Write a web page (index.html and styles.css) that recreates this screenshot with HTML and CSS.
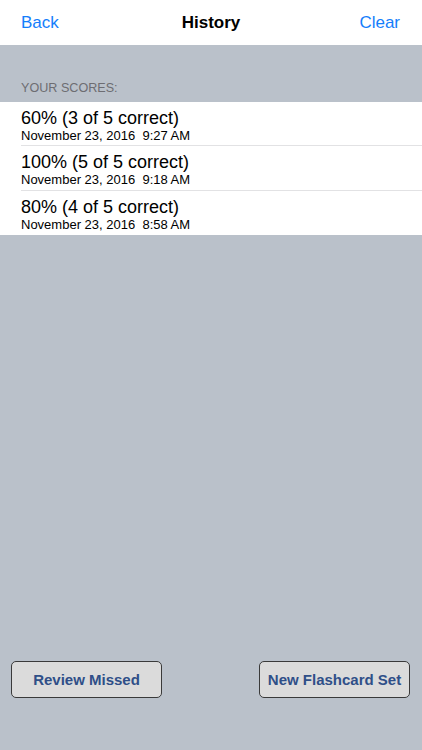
FILE: index.html
```html
<!DOCTYPE html>
<html>
<head>
<meta charset="utf-8">
<link rel="stylesheet" href="styles.css">
</head>
<body>
<div class="screen">
  <header class="navbar">
    <span class="nav-btn">Back</span>
    <span class="nav-title">History</span>
    <span class="nav-btn">Clear</span>
  </header>
  <main class="content">
    <div class="section-header">YOUR SCORES:</div>
    <ul class="list">
      <li class="row">
        <div class="score">60% (3 of 5 correct)</div>
        <div class="date">November 23, 2016  9:27 AM</div>
      </li>
      <li class="row">
        <div class="score">100% (5 of 5 correct)</div>
        <div class="date">November 23, 2016  9:18 AM</div>
      </li>
      <li class="row">
        <div class="score">80% (4 of 5 correct)</div>
        <div class="date">November 23, 2016  8:58 AM</div>
      </li>
    </ul>
  </main>
  <footer class="actions">
    <button class="action-btn">Review Missed</button>
    <button class="action-btn">New Flashcard Set</button>
  </footer>
</div>
</body>
</html>
```
FILE: styles.css
```css
* { box-sizing: border-box; }
html, body {
  margin: 0;
  padding: 0;
  width: 422px;
  height: 750px;
  overflow: hidden;
}
body {
  font-family: "Liberation Sans", Arial, sans-serif;
  background: #bac1ca;
}
.screen {
  display: flex;
  flex-direction: column;
  height: 750px;
}
.navbar {
  height: 45px;
  background: #ffffff;
  display: flex;
  align-items: center;
  justify-content: space-between;
  padding: 1px 22px 0 21px;
  position: relative;
}
.nav-btn {
  color: #147efb;
  font-size: 17px;
}
.nav-title {
  position: absolute;
  left: 0;
  right: 0;
  text-align: center;
  font-weight: bold;
  font-size: 17px;
  color: #000;
  pointer-events: none;
}
.content {
  flex: 1;
}
.section-header {
  padding: 36px 21px 0 21px;
  height: 57px;
  font-size: 12.6px;
  color: #6d6d72;
}
.list {
  list-style: none;
  margin: 0;
  padding: 0 0 0 21px;
  background: #ffffff;
}
.row {
  height: 44.4px;
  padding-top: 6px;
  border-bottom: 1px solid #e2e2e4;
}
.row:last-child {
  border-bottom: none;
}
.score {
  font-size: 18px;
  line-height: 20px;
  color: #000;
}
.date {
  font-size: 13px;
  line-height: 15px;
  color: #000;
  white-space: pre;
}
.actions {
  display: flex;
  justify-content: space-between;
  padding: 0 12px 52px 11px;
}
.action-btn {
  width: 151px;
  height: 37px;
  background: #dbdbdb;
  border: 1.5px solid #3a3a3a;
  border-radius: 5px;
  font-family: "Liberation Sans", Arial, sans-serif;
  font-weight: bold;
  font-size: 15px;
  color: #2f4f88;
  padding: 0;
}
```
